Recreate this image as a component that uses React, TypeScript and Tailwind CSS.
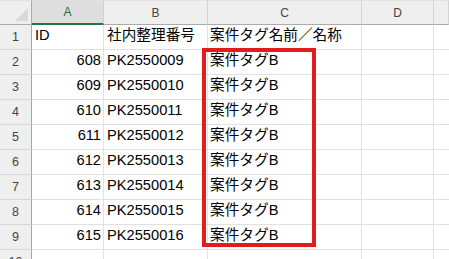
import React from "react";

const cols = ["A", "B", "C", "D", ""];

type Row = [string | number, string, string];

const data: Row[] = [
  ["ID", "社内整理番号", "案件タグ名前／名称"],
  [608, "PK2550009", "案件タグB"],
  [609, "PK2550010", "案件タグB"],
  [610, "PK2550011", "案件タグB"],
  [611, "PK2550012", "案件タグB"],
  [612, "PK2550013", "案件タグB"],
  [613, "PK2550014", "案件タグB"],
  [614, "PK2550015", "案件タグB"],
  [615, "PK2550016", "案件タグB"],
  ["", "", ""],
];

const cellFont = {
  fontFamily: '"Liberation Sans", "Noto Sans CJK JP", sans-serif',
};

export default function App() {
  return (
    <div className="w-[449px] h-[259px] overflow-hidden bg-white relative">
      <div className="grid grid-cols-[32px_72px_104px_154px_72px_1fr]">
        {/* corner */}
        <div className="h-[25px] bg-[#efefef] border-b border-r border-b-[#ababab] border-r-[#ababab] border-t border-t-[#e2e2e2] relative">
          <svg className="absolute left-0 top-0" width="31" height="24" viewBox="0 0 31 24">
            <polygon points="15,20 28,20 28,7" fill="#d9d9d9" />
          </svg>
        </div>
        {/* column headers */}
        {cols.map((c, i) => (
          <div
            key={"h" + i}
            className={
              i === 0
                ? "h-[25px] bg-[#dedede] border-t border-t-[#e2e2e2] border-r border-r-[#d0d0d0] border-b-2 border-b-[#217346] flex items-center justify-center text-[12px] text-[#1e6b42]"
                : "h-[25px] bg-[#efefef] border-t border-t-[#e2e2e2] border-r border-r-[#d4d4d4] border-b border-b-[#ababab] flex items-center justify-center text-[12px] text-[#444444]"
            }
            style={{ fontFamily: '"Liberation Sans", sans-serif' }}
          >
            {c}
          </div>
        ))}
        {data.map((r, ri) => (
          <React.Fragment key={"r" + ri}>
            <div
              className="h-[25px] bg-[#efefef] border-b border-b-[#d6d6d6] border-r border-r-[#a6a6a6] flex justify-center text-[12.5px] leading-[20px] pt-[2px] text-[#444444]"
              style={{ fontFamily: '"Liberation Sans", sans-serif' }}
            >
              {ri + 1}
            </div>
            <div
              className={
                "h-[25px] border-b border-r border-[#e1e1e1] px-[2px] text-[14.67px] leading-[20px] text-black whitespace-nowrap overflow-hidden " +
                (typeof r[0] === "number" ? "text-right pr-[2px]" : "text-left pl-[3px]")
              }
              style={cellFont}
            >
              {r[0]}
            </div>
            <div
              className="h-[25px] border-b border-r border-[#e1e1e1] pl-[3px] text-[14.67px] leading-[20px] text-black whitespace-nowrap overflow-hidden"
              style={cellFont}
            >
              {r[1]}
            </div>
            <div
              className="h-[25px] border-b border-r border-[#e1e1e1] pl-[2px] text-[14.67px] leading-[20px] text-black whitespace-nowrap overflow-hidden"
              style={cellFont}
            >
              {r[2]}
            </div>
            <div className="h-[25px] border-b border-r border-[#e1e1e1]" />
            <div className="h-[25px] border-b border-[#e1e1e1]" />
          </React.Fragment>
        ))}
      </div>
      {/* highlight frame over the tag column */}
      <div className="absolute left-[202px] top-[48px] w-[114px] h-[199px] border-4 border-[#e21c1c] pointer-events-none" />
    </div>
  );
}
